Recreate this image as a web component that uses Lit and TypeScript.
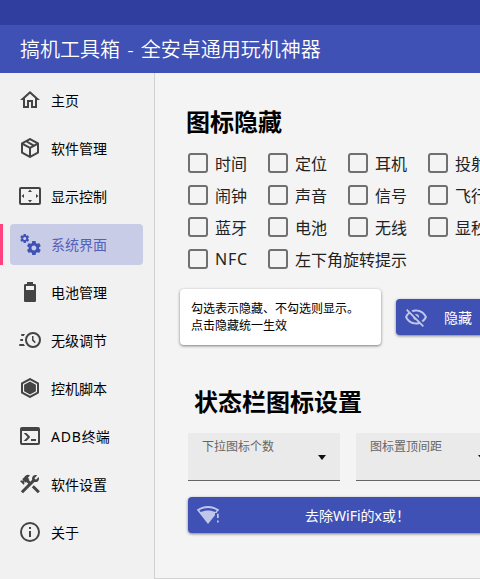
import { LitElement, html, css, svg } from "lit";
import { customElement } from "lit/decorators.js";
import { classMap } from "lit/directives/class-map.js";

const ICONS: Record<string, string> = {
  home: "M12 5.69L17 10.19V18H15V12H9V18H7V10.19L12 5.69M12 3L2 12H5V20H11V14H13V20H19V12H22L12 3",
  box: "M21,16.5C21,16.88 20.79,17.21 20.47,17.38L12.57,21.82C12.41,21.94 12.21,22 12,22C11.79,22 11.59,21.94 11.43,21.82L3.53,17.38C3.21,17.21 3,16.88 3,16.5V7.5C3,7.12 3.21,6.79 3.53,6.62L11.43,2.18C11.59,2.06 11.79,2 12,2C12.21,2 12.41,2.06 12.57,2.18L20.47,6.62C20.79,6.79 21,7.12 21,7.5V16.5M12,4.15L10.11,5.22L16,8.61L17.96,7.5L12,4.15M6.04,7.5L12,10.85L13.96,9.75L8.08,6.35L6.04,7.5M5,15.91L11,19.29V12.58L5,9.21V15.91M19,15.91V9.21L13,12.58V19.29L19,15.91Z",
  display: "M12,5.5L10,8H14L12,5.5M18,10V14L20.5,12L18,10M6,10L3.5,12L6,14V10M14,16H10L12,18.5L14,16M21,3H3A2,2 0 0,0 1,5V19A2,2 0 0,0 3,21H21A2,2 0 0,0 23,19V5A2,2 0 0,0 21,3M21,19H3V5H21V19Z",
  cogs: "M15.9,18.45C17.25,18.45 18.35,17.35 18.35,16C18.35,14.65 17.25,13.55 15.9,13.55C14.54,13.55 13.45,14.65 13.45,16C13.45,17.35 14.54,18.45 15.9,18.45M21.1,16.68L22.58,17.84C22.71,17.95 22.75,18.13 22.66,18.29L21.26,20.71C21.17,20.86 21,20.92 20.83,20.86L19.09,20.16C18.73,20.44 18.33,20.67 17.91,20.85L17.64,22.7C17.62,22.87 17.47,23 17.3,23H14.5C14.32,23 14.18,22.87 14.15,22.7L13.89,20.85C13.46,20.67 13.07,20.44 12.71,20.16L10.96,20.86C10.81,20.92 10.62,20.86 10.54,20.71L9.14,18.29C9.05,18.13 9.09,17.95 9.22,17.84L10.7,16.68L10.65,16L10.7,15.31L9.22,14.16C9.09,14.05 9.05,13.86 9.14,13.71L10.54,11.29C10.62,11.13 10.81,11.07 10.96,11.13L12.71,11.84C13.07,11.56 13.46,11.32 13.89,11.15L14.15,9.29C14.18,9.13 14.32,9 14.5,9H17.3C17.47,9 17.62,9.13 17.64,9.29L17.91,11.15C18.33,11.32 18.73,11.56 19.09,11.84L20.83,11.13C21,11.07 21.17,11.13 21.26,11.29L22.66,13.71C22.75,13.86 22.71,14.05 22.58,14.16L21.1,15.31L21.15,16L21.1,16.68M6.69,8.07C7.56,8.07 8.26,7.37 8.26,6.5C8.26,5.63 7.56,4.92 6.69,4.92A1.58,1.58 0 0,0 5.11,6.5C5.11,7.37 5.82,8.07 6.69,8.07M10.03,6.94L11,7.68C11.07,7.75 11.09,7.87 11.03,7.97L10.13,9.53C10.08,9.63 9.96,9.67 9.86,9.63L8.74,9.18L8,9.62L7.81,10.81C7.79,10.92 7.7,11 7.59,11H5.79C5.67,11 5.58,10.92 5.56,10.81L5.4,9.62L4.64,9.18L3.52,9.63C3.41,9.67 3.3,9.63 3.24,9.53L2.34,7.97C2.28,7.87 2.31,7.75 2.39,7.68L3.34,6.94L3.31,6.5L3.34,6.06L2.39,5.32C2.31,5.25 2.28,5.13 2.34,5.03L3.24,3.47C3.3,3.37 3.41,3.32 3.52,3.37L4.63,3.82L5.4,3.38L5.56,2.19C5.58,2.08 5.67,2 5.79,2H7.59C7.7,2 7.79,2.08 7.81,2.19L8,3.38L8.74,3.82L9.86,3.37C9.96,3.32 10.08,3.37 10.13,3.47L11.03,5.03C11.09,5.13 11.07,5.25 11,5.32L10.03,6.06L10.06,6.5L10.03,6.94Z",
  battery: "M16,10H8V6H16M16.67,4H15V2H9V4H7.33A1.33,1.33 0 0,0 6,5.33V20.67C6,21.4 6.6,22 7.33,22H16.67A1.33,1.33 0 0,0 18,20.67V5.33C18,4.6 17.4,4 16.67,4Z",
  clock: "M15,4A8,8 0 0,1 23,12A8,8 0 0,1 15,20A8,8 0 0,1 7,12A8,8 0 0,1 15,4M15,6A6,6 0 0,0 9,12A6,6 0 0,0 15,18A6,6 0 0,0 21,12A6,6 0 0,0 15,6M14,8H15.5V11.78L17.83,14.11L16.77,15.17L14,12.4V8M2,18A1,1 0 0,1 1,17A1,1 0 0,1 2,16H5.83C6.14,16.71 6.54,17.38 7,18H2M3,13A1,1 0 0,1 2,12A1,1 0 0,1 3,11H5.05L5,12L5.05,13H3M4,8A1,1 0 0,1 3,7A1,1 0 0,1 4,6H7C6.54,6.62 6.14,7.29 5.83,8H4Z",
  hexagon: "M21,16.5C21,16.88 20.79,17.21 20.47,17.38L12.57,21.82C12.41,21.94 12.21,22 12,22C11.79,22 11.59,21.94 11.43,21.82L3.53,17.38C3.21,17.21 3,16.88 3,16.5V7.5C3,7.12 3.21,6.79 3.53,6.62L11.43,2.18C11.59,2.06 11.79,2 12,2C12.21,2 12.41,2.06 12.57,2.18L20.47,6.62C20.79,6.79 21,7.12 21,7.5V16.5M12,4.15L5,8.09V15.91L12,19.85L19,15.91V8.09L12,4.15M12,5.5L6.1,8.8V15.2L12,18.5L17.9,15.2V8.8Z",
  console: "M20,19V7H4V19H20M20,3A2,2 0 0,1 22,5V19A2,2 0 0,1 20,21H4A2,2 0 0,1 2,19V5C2,3.89 2.9,3 4,3H20M13,17V15H18V17H13M9.58,13L5.57,9H8.4L11.7,12.3C12.09,12.69 12.09,13.33 11.7,13.72L8.42,17H5.59L9.58,13Z",
  tools: "M13.78 15.3L19.78 21.3L21.89 19.14L15.89 13.14L13.78 15.3M17.5 10.1C17.11 10.1 16.69 10.05 16.36 9.91L4.97 21.25L2.86 19.14L10.27 11.74L8.5 9.96L7.78 10.66L6.33 9.25V12.11L5.63 12.81L2.11 9.25L2.81 8.55H5.62L4.22 7.14L7.78 3.58C8.95 2.41 10.83 2.41 12 3.58L9.89 5.74L11.3 7.14L10.59 7.85L12.38 9.63L14.2 7.75C14.06 7.42 14 7 14 6.63C14 4.66 15.56 3.11 17.5 3.11C18.09 3.11 18.61 3.25 19.08 3.53L16.41 6.2L17.91 7.7L20.58 5.03C20.86 5.5 21 6 21 6.63C21 8.55 19.45 10.1 17.5 10.1Z",
  info: "M11,9H13V7H11M12,20C7.59,20 4,16.41 4,12C4,7.59 7.59,4 12,4C16.41,4 20,7.59 20,12C20,16.41 16.41,20 12,20M12,2A10,10 0 0,0 2,12A10,10 0 0,0 12,22A10,10 0 0,0 22,12A10,10 0 0,0 12,2M11,17H13V11H11V17Z",
  eyeOff: "M2,5.27L3.28,4L20,20.72L18.73,22L15.65,18.92C14.5,19.3 13.28,19.5 12,19.5C7,19.5 2.73,16.39 1,12C1.69,10.24 2.79,8.69 4.19,7.46L2,5.27M12,9A3,3 0 0,1 15,12C15,12.35 14.94,12.69 14.83,13L11,9.17C11.31,9.06 11.65,9 12,9M12,4.5C17,4.5 21.27,7.61 23,12C22.18,14.08 20.79,15.88 19,17.19L17.58,15.76C18.94,14.82 20.06,13.54 20.82,12C19.17,8.64 15.76,6.5 12,6.5C10.91,6.5 9.84,6.68 8.84,7L7.3,5.47C8.74,4.85 10.33,4.5 12,4.5M3.18,12C4.83,15.36 8.24,17.5 12,17.5C12.69,17.5 13.37,17.43 14,17.29L11.72,15C10.29,14.85 9.15,13.71 9,12.28L5.6,8.87C4.61,9.72 3.78,10.78 3.18,12Z",
  wifi: "M12,3C8,3 4,4.3 0.8,6.8L12,21L19,12.2V10H20.8L21,9.7V8.5H22L23.2,6.8C20,4.3 16,3 12,3M12,5C15.1,5 18,5.8 20.6,7.3L19.4,8.9C17.2,8 14.6,7.4 12,7.4C9.4,7.4 6.8,8 4.6,8.9L3.4,7.3C6,5.8 8.9,5 12,5M21,10.8V15H22.7V10.8H21M21,17.5V19.6H22.7V17.5Z",
};

const icon = (name: string) => svg`
  <svg class="icon" viewBox="0 0 24 24"><path fill-rule="evenodd" d=${ICONS[name]}></path></svg>`;

// Capital abbreviations are set slightly wider than the Chinese text around them.
const spaced = (label: string) => {
  const m = label.match(/^([A-Z]+)(.*)$/);
  return m ? html`<span><span class="caps">${m[1]}</span>${m[2]}</span>` : html`<span>${label}</span>`;
};

const NAV = [
  ["home", "主页"],
  ["box", "软件管理"],
  ["display", "显示控制"],
  ["cogs", "系统界面"],
  ["battery", "电池管理"],
  ["clock", "无级调节"],
  ["hexagon", "控机脚本"],
  ["console", "ADB终端"],
  ["tools", "软件设置"],
  ["info", "关于"],
];

const CHECKS = [
  ["时间", "定位", "耳机", "投射"],
  ["闹钟", "声音", "信号", "飞行"],
  ["蓝牙", "电池", "无线", "显秒"],
  ["NFC", "左下角旋转提示"],
];

@customElement("app-root")
export class AppRoot extends LitElement {
  static styles = css`
    :host {
      display: flex;
      flex-direction: column;
      width: 480px;
      height: 579px;
      overflow: hidden;
      background: #f4f4f4;
      color: #000;
      font-family: "Noto Sans", "Noto Sans CJK SC", sans-serif;
    }
    * { box-sizing: border-box; }
    .status { height: 25px; flex: none; background: #303f9f; }
    .bar {
      height: 48px;
      flex: none;
      padding-left: 20px;
      background: #3f51b5;
      color: #fff;
      font-size: 20px;
      font-weight: 350;
      line-height: 49px;
      word-spacing: 2px;
      white-space: nowrap;
    }
    .body { flex: 1; display: flex; min-height: 0; }
    .side {
      width: 155px;
      flex: none;
      display: flex;
      flex-direction: column;
      gap: 7px;
      padding-top: 7px;
      background: #f1f1f1;
      border-right: 1px solid #d0d0d0;
    }
    .nav { display: flex; height: 41px; flex: none; }
    .mark { width: 3px; margin-right: 7px; }
    .pill {
      width: 133px;
      display: flex;
      align-items: center;
      gap: 9px;
      padding: 0 0 2px 8px;
      border-radius: 4px;
      font-size: 14px;
      white-space: nowrap;
    }
    .nav .icon { color: #444; }
    .active .mark { background: #ff4081; }
    .active .pill { background: #c9cce6; color: #5361b9; }
    .active .icon { color: #3f51b5; }
    .icon { width: 24px; height: 24px; flex: none; fill: currentColor; }
    .caps { letter-spacing: 0.8px; }
    .main {
      flex: 1;
      min-width: 0;
      height: 506px;
      overflow: hidden;
      border-bottom: 1px solid #d3d3d3;
      padding: 31px 0 0 33px;
    }
    .title { margin: 0; font-size: 24px; line-height: 36px; font-weight: 700; white-space: nowrap; }
    .first { margin-left: -2px; }
    .second { margin: 39px 0 0 6px; }
    .checks { margin-top: 7px; }
    .row { display: flex; height: 32px; align-items: center; }
    .check {
      display: flex;
      flex: none;
      align-items: center;
      width: 80px;
      gap: 7px;
      font-size: 16px;
      color: #222;
      white-space: nowrap;
    }
    .square { width: 20px; height: 20px; flex: none; border: 2px solid #707070; border-radius: 3px; }
    .notice { display: flex; align-items: flex-start; margin: 14px 0 0 -8px; }
    .card {
      width: 201px;
      height: 56px;
      flex: none;
      padding: 11px 0 0 11px;
      border-radius: 4px;
      background: #fff;
      box-shadow: 0 1px 3px rgba(0, 0, 0, 0.5);
      font-size: 12px;
      line-height: 17px;
      white-space: nowrap;
    }
    .btn {
      display: flex;
      align-items: center;
      height: 36px;
      flex: none;
      padding-left: 8px;
      border-radius: 4px;
      background: #3f51b5;
      color: #fff;
      box-shadow: 0 1px 3px rgba(0, 0, 0, 0.5);
      font-size: 14px;
      white-space: nowrap;
    }
    .btn .icon { color: #c0c7ea; }
    .hide { width: 110px; margin: 10px 0 0 15px; gap: 16px; }
    .fields { display: flex; gap: 16px; margin-top: 13px; }
    .field {
      width: 152px;
      height: 48px;
      flex: none;
      display: flex;
      justify-content: space-between;
      padding: 4px 14px 0 14px;
      background: #eaeaea;
      border-bottom: 1px solid #666;
      font-size: 12px;
      line-height: 20px;
      color: #666;
    }
    .field + .field { width: 144px; }
    .arrow {
      margin-top: 18px;
      width: 0;
      height: 0;
      border: 4px solid transparent;
      border-top: 5px solid #111;
      border-bottom: 0;
    }
    .wide { width: 320px; margin-top: 16px; gap: 85px; }
  `;

  render() {
    return html`
      <div class="status"></div>
      <div class="bar">搞机工具箱 - 全安卓通用玩机神器</div>
      <div class="body">
        <nav class="side">
          ${NAV.map(([name, label]) => html`
            <div class=${classMap({ nav: true, active: name === "cogs" })}>
              <div class="mark"></div>
              <div class="pill">${icon(name)}${spaced(label)}</div>
            </div>`)}
        </nav>
        <main class="main">
          <h2 class="title first">图标隐藏</h2>
          <div class="checks">
            ${CHECKS.map((row) => html`<div class="row">
              ${row.map((label) => html`<div class="check"><span class="square"></span>${spaced(label)}</div>`)}
            </div>`)}
          </div>
          <div class="notice">
            <div class="card">勾选表示隐藏、不勾选则显示。<br />点击隐藏统一生效</div>
            <div class="btn hide">${icon("eyeOff")}<span>隐藏</span></div>
          </div>
          <h2 class="title second">状态栏图标设置</h2>
          <div class="fields">
            ${["下拉图标个数", "图标置顶间距"].map((label) => html`
              <div class="field"><span>${label}</span><span class="arrow"></span></div>`)}
          </div>
          <div class="btn wide">${icon("wifi")}<span>去除WiFi的x或！</span></div>
        </main>
      </div>
    `;
  }
}
